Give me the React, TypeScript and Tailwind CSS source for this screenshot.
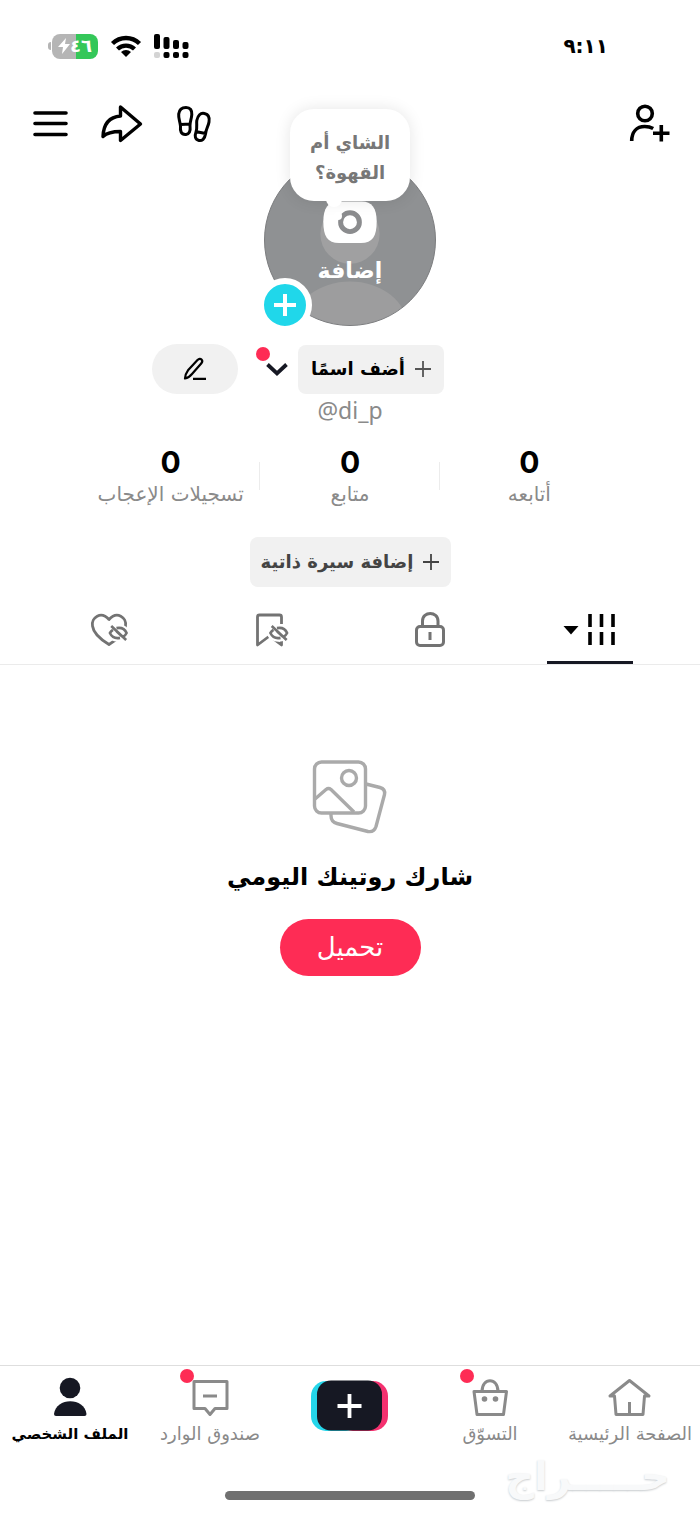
import type { ReactNode } from "react";

const stats = [
  { value: "0", label: "أتابعه" },
  { value: "0", label: "متابع" },
  { value: "0", label: "تسجيلات الإعجاب" },
];

function StatusBar() {
  return (
    <div className="flex h-[92px] items-center justify-between pl-12 pr-[92px]">
      <time className="text-xl font-bold">٩:١١</time>
      <div dir="ltr" className="flex items-center gap-3">
        {/* Battery */}
        <div className="flex items-center gap-px">
          <span className="h-2 w-[3px] rounded-l-full bg-[#b5b5b5]" />
          <span className="flex h-[25px] w-[46px] items-center justify-center rounded-lg bg-linear-to-r from-[#b5b5b5] from-52% to-[#34c759] to-52% text-white">
            <svg className="h-4 w-3" viewBox="0 0 12 16" fill="currentColor">
              <path d="M8 0L0 9h5l-1 7 8-10H7z" />
            </svg>
            <span className="text-lg font-bold leading-none">٤٦</span>
          </span>
        </div>
        {/* Wi-Fi */}
        <svg className="h-6 w-8" viewBox="0 0 32 24" fill="none" stroke="currentColor" strokeWidth={4.400}>
          <path d="M2.500 9.500a19.500 19.500 0 0127 0" />
          <path d="M7.500 15a12.500 12.500 0 0117 0" />
          <path d="M16 23l-5-5a7.500 7.500 0 0110 0z" fill="currentColor" stroke="none" />
        </svg>
        {/* Dual SIM signal */}
        <svg className="h-6 w-9" viewBox="0 0 36 24" fill="currentColor">
          <rect x="0" y="0" width="6" height="15" rx="2" />
          <rect x="9.500" y="3" width="6" height="12" rx="2" />
          <rect x="19" y="6" width="6" height="9" rx="2" />
          <rect x="28.500" y="8" width="6" height="7" rx="2" />
          <rect x="0" y="18" width="6" height="6" rx="2" fill="#d4d4d4" />
          <rect x="9.500" y="18" width="6" height="6" rx="2" />
          <rect x="19" y="18" width="6" height="6" rx="2" />
          <rect x="28.500" y="18" width="6" height="6" rx="2" />
        </svg>
      </div>
    </div>
  );
}

function Header() {
  return (
    <header className="flex h-16 items-center justify-between px-7">
      <button type="button" aria-label="إضافة أصدقاء">
        <svg className="h-11 w-11" viewBox="628 102 44 44" fill="none" stroke="currentColor" strokeWidth={3.600}>
          <circle cx="645" cy="113.500" r="7.300" />
          <path d="M631.700 141c0-9 5-14.500 13-14.500 3.500 0 6 .6 8.500 2M661.300 125v16.500M653 133.300h16.500" />
        </svg>
      </button>
      <div dir="ltr" className="flex items-center gap-7">
        <button type="button" aria-label="القائمة">
          <svg className="h-11 w-11" viewBox="28 102 44 44" fill="none" stroke="currentColor" strokeWidth={3.600} strokeLinecap="round">
            <path d="M35 113h31M35 123.500h31M35 134.500h31" />
          </svg>
        </button>
        <button type="button" aria-label="مشاركة">
          <svg className="h-11 w-11" viewBox="100 102 44 44" fill="none" stroke="currentColor" strokeWidth={3.400} strokeLinejoin="round">
            <path d="M120.500 107l20 17-20 16.500v-9c-8 0-13.500 1-17.500 5 .5-12 6-19.500 17.500-20.500z" />
          </svg>
        </button>
        <button type="button" aria-label="زيارات الملف الشخصي">
          <svg className="h-11 w-11" viewBox="172 102 44 44" fill="none" stroke="currentColor" strokeWidth={3} strokeLinejoin="round">
            <path d="M186 107.500c4.500 0 6 3 5.800 7s-1.800 7-1.800 11c.6 5-.5 8.500-4 9-5 .5-6-3.500-5.500-8.500-.5-5-2.200-7.500-1.800-12 .5-4 3.300-6.500 7.300-6.500zM180.500 124.500l10-.5" />
            <path d="M204.500 113.500c4.500 1 5.200 4.800 4.500 8.500-.6 4-3 7-3.500 12-.8 5-3.500 7-6.500 6.500-4-1-4.500-4.500-3-8.500 1.500-4 .3-8 .8-11.500 1-5 3.700-8 7.700-7zM195.500 131.500l10 2" />
          </svg>
        </button>
      </div>
    </header>
  );
}

function Avatar() {
  return (
    <div className="relative mx-auto -mt-0.5 w-[172px]">
      <button type="button" className="relative block h-[172px] w-[172px] overflow-hidden rounded-full border border-[#7c7d7f] bg-[#8f9193] text-white">
        <svg className="absolute inset-0 h-full w-full" viewBox="264 154 172 172" fill="none">
          <circle cx="350" cy="234" r="30" fill="#a0a0a1" />
          <ellipse cx="350" cy="328" rx="58" ry="46" fill="#9d9d9e" />
          <path d="M338 201h24c10 0 15 7 15 20 0 15-4 22-16 22h-22c-12 0-16-7-16-22 0-13 5-20 15-20z" fill="#fff" />
          <circle cx="350" cy="222" r="9.500" stroke="#8b8c8e" strokeWidth="5" />
        </svg>
        <span className="relative block pt-[60px] text-[22px] font-bold">إضافة</span>
      </button>
      {/* Thought bubble */}
      <div className="absolute -top-[45px] left-[26px] flex h-[92px] w-[120px] items-center justify-center rounded-3xl bg-white text-center text-lg font-bold leading-[30px] text-[#777] shadow-[0_0_16px_rgba(0,0,0,0.1)]">
        <p className="pt-1.5">
          الشاي أم
          <br />
          القهوة؟
        </p>
        <span className="absolute left-9 top-[82px] h-4 w-4 rounded-full bg-white" />
        <span className="absolute left-11 top-[103px] h-2 w-2 rounded-full bg-white" />
      </div>
      <button type="button" aria-label="إضافة قصة" className="absolute -bottom-1.5 -left-1.5 flex h-[54px] w-[54px] items-center justify-center rounded-full border-[6px] border-white bg-[#20d7ea]">
        <svg className="h-6 w-6" viewBox="0 0 24 24" stroke="#fff" strokeWidth={4}>
          <path d="M12 1v22M1 12h22" />
        </svg>
      </button>
    </div>
  );
}

function PlusIcon() {
  return (
    <svg className="h-4 w-4" viewBox="0 0 16 16" stroke="currentColor" strokeWidth={1.800}>
      <path d="M8 0v16M0 8h16" />
    </svg>
  );
}

function NameRow() {
  return (
    <div className="mt-[18px] grid grid-cols-[1fr_auto_1fr] items-center gap-[18px]">
      <span />
      <div className="flex items-center gap-2.5">
        <button type="button" className="flex h-[49px] w-[146px] items-center justify-center gap-2.5 rounded-lg bg-[#f1f1f1] text-lg font-bold">
          <span className="text-[#555]"><PlusIcon /></span>
          أضف اسمًا
        </button>
        <button type="button" aria-label="تبديل الحساب" className="relative flex h-12 w-8 items-center">
          <svg className="h-4 w-[22px]" viewBox="0 0 22 16" fill="none" stroke="#161823" strokeWidth={3.800}>
            <path d="M1.500 3.500l9.500 9 9.500-9" />
          </svg>
          <span className="absolute left-0 top-0.5 h-3.5 w-3.5 rounded-full bg-[#fe2c55]" />
        </button>
      </div>
      <button type="button" aria-label="تعديل الملف الشخصي" className="flex h-[50px] w-[86px] items-center justify-center rounded-full bg-[#f1f1f1]">
        <svg className="h-6 w-6" viewBox="0 0 24 24" fill="none" stroke="currentColor" strokeWidth={2.200} strokeLinejoin="round">
          <path d="M2 21.500c0-4 1-5.500 3-8.200L14.500 3c1.500-1.500 3-1.500 4-.5s1 2.500-.3 4L9 17c-2 2.500-4 4-7 4.500zM10 21.800h13" />
        </svg>
      </button>
    </div>
  );
}

function Stats() {
  return (
    <dl className="mx-auto mt-[22px] grid w-full max-w-[538px] grid-cols-3">
      {stats.map((stat, i) => (
        <div key={stat.label} className="relative flex flex-col-reverse items-center">
          <dt className="whitespace-nowrap text-xl leading-8 text-[#8a8a8a]">{stat.label}</dt>
          <dd className="font-[Inter,sans-serif] text-3xl font-bold leading-8">{stat.value}</dd>
          {i > 0 && <span className="absolute right-0 top-4 h-7 w-px bg-[#ececec]" />}
        </div>
      ))}
    </dl>
  );
}

// Crossed-out eye sitting over the lower right of an icon
const hiddenEye = (
  <>
    <path d="M0 0c4-8 16-9 20.500 0-4.500 9-16.500 8-20.500 0z" stroke="#fff" strokeWidth={7} fill="#fff" />
    <path d="M8.500-5.500c5-1 9.500 1 11.500 5.500-1 2-2.500 3.500-4 4.200M4.500-3.500c-1.500 1-2.500 2-3.500 3.500 2.500 5 7 6.500 11.500 5.500" />
    <path d="M2.500-8l17 16M8.500-2l6.500 6" />
  </>
);

const tabs: { label: string; active?: boolean; icon: ReactNode }[] = [
  {
    label: "الفيديوهات",
    active: true,
    icon: (
      <svg className="h-10 w-14" viewBox="562 610 56 40" fill="none" stroke="currentColor" strokeWidth={3.600}>
        <path d="M563.500 626h15l-7.500 8.500z" fill="currentColor" stroke="none" />
        <path d="M590 614v13M601.500 614v13M613 614v13M590 632v13M601.500 632v13M613 632v13" />
      </svg>
    ),
  },
  {
    label: "الخاصة",
    icon: (
      <svg className="h-10 w-10" viewBox="410 610 40 40" fill="none" stroke="currentColor" strokeWidth={3}>
        <rect x="416.500" y="626.500" width="27" height="19" rx="3.500" />
        <path d="M422.500 626v-5c0-10 15.500-10 15.500 0v5M430 632v8" />
      </svg>
    ),
  },
  {
    label: "المحفوظة",
    icon: (
      <svg className="h-10 w-10" viewBox="250 610 40 40" fill="none" stroke="currentColor" strokeWidth={2.800} strokeLinejoin="round">
        <path d="M281.500 624v-7q0-2-2-2h-20q-2 0-2 2v28l12-9 12 9v-6" />
        <g transform="translate(269.500 633) scale(.88)" strokeWidth={3}>{hiddenEye}</g>
      </svg>
    ),
  },
  {
    label: "الإعجابات",
    icon: (
      <svg className="h-10 w-10" viewBox="90 610 40 40" fill="none" stroke="currentColor" strokeWidth={2.800} strokeLinejoin="round">
        <path d="M109 619.500c-8-9-18-2-16.500 6.500 1 8 9 14 16.500 18.500 7.500-4.500 15-10.500 16.500-18.500 1.500-8.500-8.500-15.500-16.500-6.500z" />
        <g transform="translate(109 633) scale(.88)" strokeWidth={3}>{hiddenEye}</g>
      </svg>
    ),
  },
];

function Tabs() {
  return (
    <div role="tablist" className="mt-2 flex h-[70px] border-b border-[#ebebeb] px-[30px]">
      {tabs.map((tab) => (
        <button
          key={tab.label}
          type="button"
          role="tab"
          aria-label={tab.label}
          aria-selected={!!tab.active}
          className={tab.active ? "flex flex-1 flex-col items-center pt-[15px] text-black" : "flex flex-1 flex-col items-center pt-[15px] text-[#737373]"}
        >
          {tab.icon}
          {tab.active && <span className="mt-auto h-[3px] w-[86px] bg-[#161823]" />}
        </button>
      ))}
    </div>
  );
}

function EmptyState() {
  return (
    <section className="flex flex-col items-center pt-[94px]">
      <svg className="h-[76px] w-[76px]" viewBox="313 759 76 76" fill="none" stroke="#aaa" strokeWidth={3.400} strokeLinejoin="round">
        <path d="M367 784l14 3.500q5.500 1.500 4.500 7l-8.500 32q-2 6-8 5l-31-8q-6-1.500-6-8v-3" />
        <rect x="315.500" y="762" width="51" height="51" rx="7" />
        <circle cx="350" cy="778" r="7.500" />
        <path d="M316 799l11-9.500q2.500-2 5 0l23 22.500" />
      </svg>
      <h2 className="mt-5 text-2xl font-bold leading-[44px]">شارك روتينك اليومي</h2>
      <button type="button" className="mt-5 h-[57px] w-[141px] rounded-full bg-[#fe2c55] text-[26px] text-white">
        تحميل
      </button>
    </section>
  );
}

const navItems: { label: string; active?: boolean; badge?: boolean; icon: ReactNode }[] = [
  {
    label: "الصفحة الرئيسية",
    icon: (
      <svg className="h-11 w-11" viewBox="608 1375 44 44" fill="none" stroke="currentColor" strokeWidth={3} strokeLinejoin="round">
        <path d="M610 1395l19.500-15.500 19.500 15.500h-4.500l-1.500 18.500h-27l-1.500-18.500zM629.500 1401v12" />
      </svg>
    ),
  },
  {
    label: "التسوّق",
    badge: true,
    icon: (
      <svg className="h-11 w-11" viewBox="468 1375 44 44" fill="none" stroke="currentColor" strokeWidth={3} strokeLinejoin="round">
        <path d="M474 1390.500h32.500l-3 23h-26.500zM482 1390.500c0-14.500 16-14.500 16 0" />
        <circle cx="484.500" cy="1398" r="2.800" fill="currentColor" stroke="none" />
        <circle cx="495.500" cy="1398" r="2.800" fill="currentColor" stroke="none" />
      </svg>
    ),
  },
  {
    label: "",
    icon: null,
  },
  {
    label: "صندوق الوارد",
    badge: true,
    icon: (
      <svg className="h-11 w-11" viewBox="188 1375 44 44" fill="none" stroke="currentColor" strokeWidth={3} strokeLinejoin="round">
        <path d="M194 1380.500h33v27h-12l-5 6-5-6h-11zM203 1395h14" />
      </svg>
    ),
  },
  {
    label: "الملف الشخصي",
    active: true,
    icon: (
      <svg className="h-11 w-11" viewBox="48 1375 44 44" fill="#161823">
        <circle cx="70" cy="1387" r="10.300" />
        <path d="M54 1413c2-17 30.500-17 32.500 0q0 2-2 2h-28.500q-2 0-2-2z" />
      </svg>
    ),
  },
];

function BottomNav() {
  return (
    <nav className="mt-auto grid h-[95px] grid-cols-5 border-t border-[#dedede]">
      {navItems.map((item) =>
        item.icon ? (
          <a key={item.label} href="#" className={item.active ? "flex flex-col items-center pt-2.5 text-black" : "flex flex-col items-center pt-2.5 text-[#8a8a8a]"}>
            <span className="relative">
              {item.icon}
              {item.badge && <span className="absolute -left-2 -top-[7px] h-3.5 w-3.5 rounded-full bg-[#fe2c55]" />}
            </span>
            <span className={item.active ? "whitespace-nowrap text-[15px] font-bold leading-7" : "whitespace-nowrap text-lg leading-7"}>{item.label}</span>
          </a>
        ) : (
          <button key="create" type="button" aria-label="إنشاء" className="flex justify-center pt-3.5">
            <svg className="h-[51px] w-[78px]" viewBox="0 0 78 51">
              <rect x="0" y="1" width="50" height="50" rx="15" fill="#25d6ea" />
              <rect x="27" y="1" width="50" height="50" rx="15" fill="#f4316f" />
              <rect x="6" y="0.500" width="65" height="50" rx="14" fill="#161823" />
              <path d="M38.500 14v24M26.500 26h24" stroke="#fff" strokeWidth="3.800" />
            </svg>
          </button>
        ),
      )}
    </nav>
  );
}

export default function App() {
  return (
    <div dir="rtl" lang="ar" className="flex min-h-screen flex-col bg-white font-['DejaVu_Sans',sans-serif] text-black">
      <StatusBar />
      <Header />
      <main>
        <Avatar />
        <NameRow />
        <p dir="ltr" className="mt-0.5 text-center font-['Noto_Sans',sans-serif] text-[23px] leading-7 text-[#8a8a8a]">
          @di_p
        </p>
        <Stats />
        <button type="button" className="mx-auto mt-[27px] flex h-[50px] w-[201px] items-center justify-center gap-2.5 rounded-lg bg-[#f1f1f1] text-lg font-bold text-[#444]">
          <PlusIcon />
          إضافة سيرة ذاتية
        </button>
        <Tabs />
        <EmptyState />
      </main>
      <BottomNav />
      <footer className="grid h-[54px] grid-cols-[1fr_auto_1fr]">
        <span className="text-center text-[40px] font-bold leading-8 text-[#f8f9fa] [text-shadow:0_1px_2px_#c8cccf]">حـــــراج</span>
        <span className="mt-[31px] h-[9px] w-[250px] rounded-full bg-[#707070]" />
      </footer>
    </div>
  );
}
